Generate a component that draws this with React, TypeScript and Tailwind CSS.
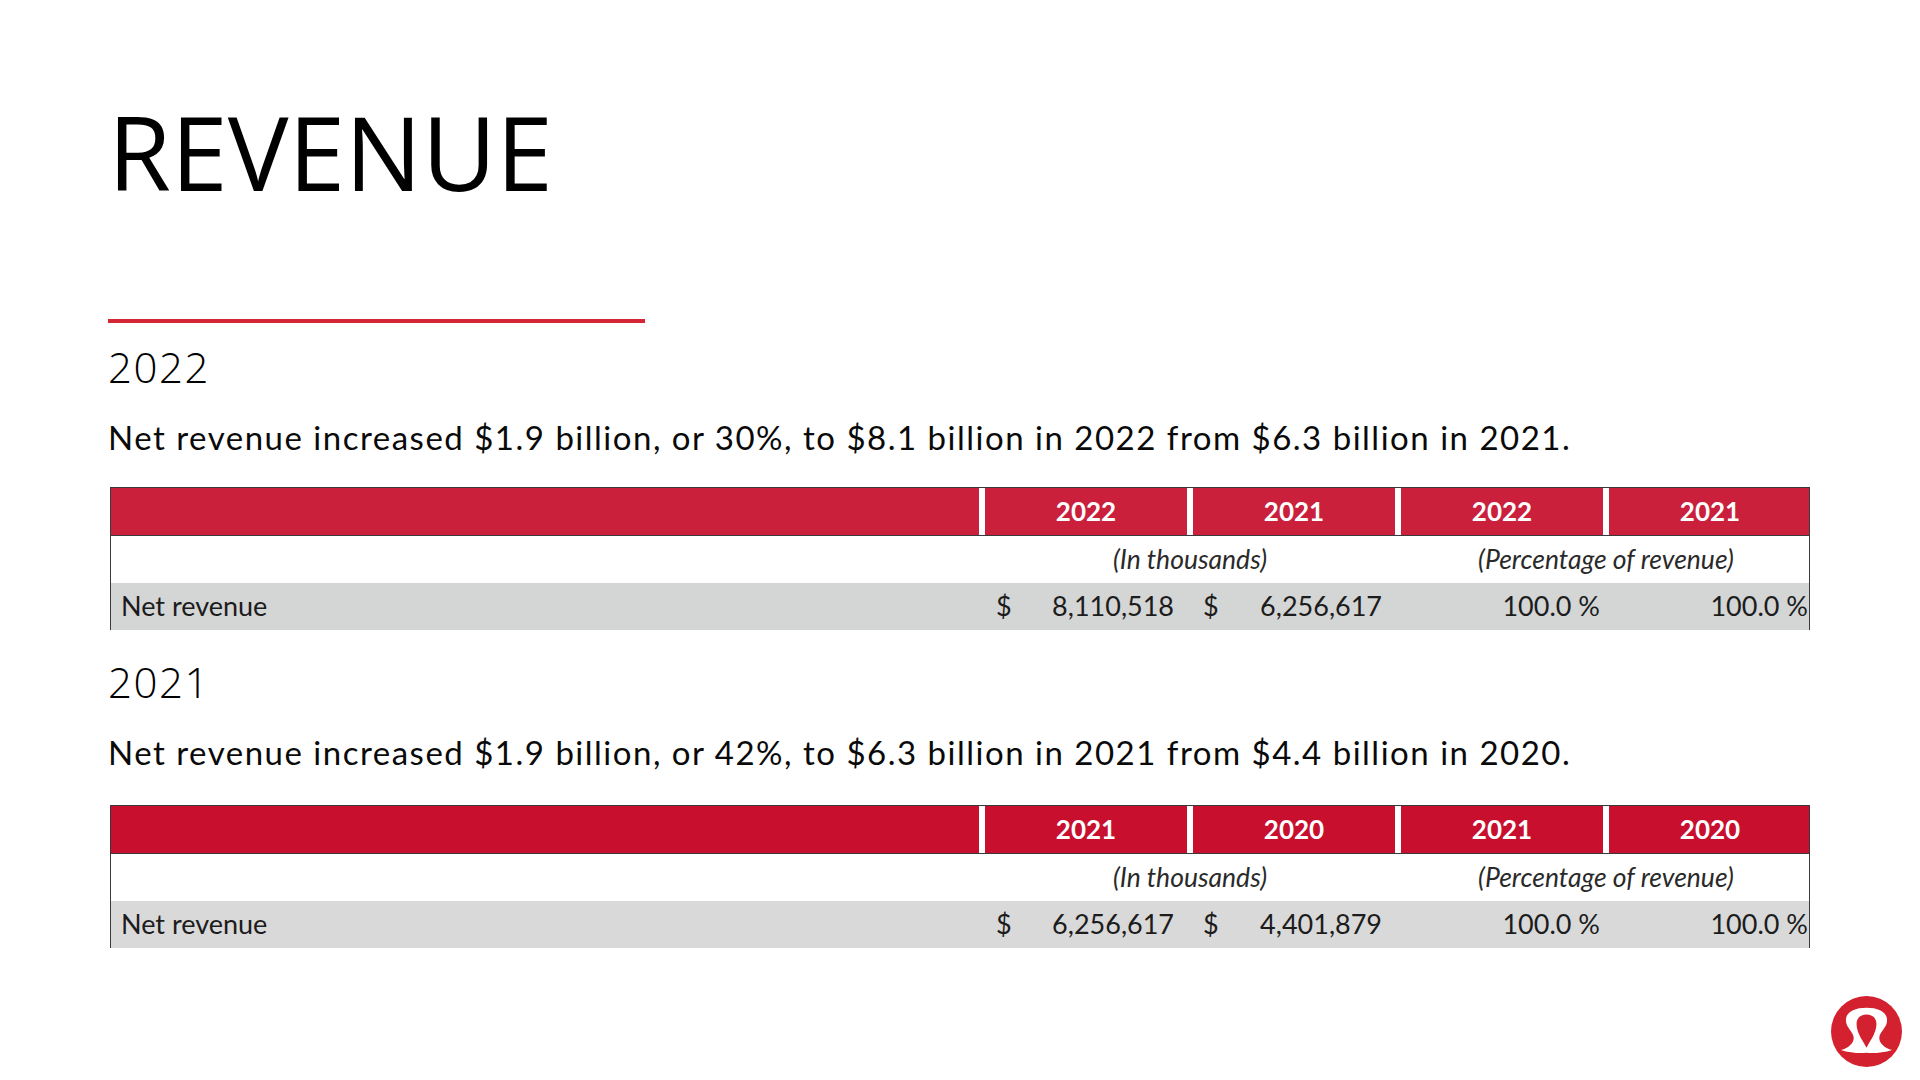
import React from "react";

type TableProps = {
  years: [string, string];
  amounts: [string, string];
  headBg: string;
  rowBg: string;
};

const RevenueTable = ({ years, amounts, headBg, rowBg }: TableProps) => {
  const heads = [years[0], years[1], years[0], years[1]];
  return (
    <div className="ml-[2px] w-[1700px] border-x border-t border-[#3a3a3a] font-['Lato',sans-serif]">
      <div className={`grid h-[48px] grid-cols-[868px_208px_208px_208px_208px] border-b border-[#3a3a3a] ${headBg}`}>
        <div />
        {heads.map((y, i) => (
          <div
            key={i}
            className="flex items-center justify-center border-l-[6px] border-white text-[26px] font-bold text-white"
          >
            {y}
          </div>
        ))}
      </div>
      <div className="grid h-[47px] grid-cols-[868px_416px_416px] bg-white text-[26.5px] italic text-[#2a2a2a]">
        <div />
        <div className="flex items-center justify-center pl-[6px]">(In thousands)</div>
        <div className="flex items-center justify-center pl-[6px]">(Percentage of revenue)</div>
      </div>
      <div className={`grid h-[47px] grid-cols-[868px_208px_208px_208px_208px] text-[27px] text-[#1c1c1c] ${rowBg}`}>
        <div className="flex items-center pl-[10px]">Net revenue</div>
        <div className="flex items-center justify-between pl-[17px] pr-[13px]">
          <span>$</span>
          <span>{amounts[0]}</span>
        </div>
        <div className="flex items-center justify-between pl-[16px] pr-[13px]">
          <span>$</span>
          <span>{amounts[1]}</span>
        </div>
        <div className="flex items-center justify-end pr-[3px]">100.0 %</div>
        <div className="flex items-center justify-end pr-[3px]">100.0 %</div>
      </div>
    </div>
  );
};

const Logo = () => (
  <svg viewBox="0 0 100 100" className="h-[71px] w-[71px]">
    <circle cx="50" cy="50" r="50" fill="#d3212f" />
    <path
      fill="#fff"
      d="M50 80 C40 81 26 80 14 76 C25 73 32 66 32 59 C32 50 21 45 21 34 C21 22 34 16.5 50 16.5 C66 16.5 79 22 79 34 C79 45 68 50 68 59 C68 66 75 73 86 76 C74 80 60 81 50 80 Z"
    />
    <path
      fill="#d3212f"
      d="M50 73 C46 64 36 53 36 39 C36 31 42 26 50 26 C58 26 64 31 64 39 C64 53 54 64 50 73 Z"
    />
  </svg>
);

export default function App() {
  return (
    <div className="flex h-[1080px] w-[1920px] flex-col bg-white pl-[108px] pr-[18px] text-black">
      <h1 className="mt-[101px] font-['Open_Sans',sans-serif] text-[102px] font-medium leading-[102px]">
        REVENUE
      </h1>
      <div className="mt-[116px] h-[4px] w-[537px] bg-[#d42634]" />
      <h2 className="mt-[23px] font-['Open_Sans',sans-serif] text-[42px] font-light leading-[42px] tracking-[1.5px]">
        2022
      </h2>
      <p className="mt-[33px] font-['Lato',sans-serif] text-[33px] font-normal leading-[33px] tracking-[1.5px] text-[#0a0a0a]">
        Net revenue increased $1.9 billion, or 30%, to $8.1 billion in 2022 from $6.3 billion in 2021.
      </p>
      <div className="mt-[33px]">
        <RevenueTable
          years={["2022", "2021"]}
          amounts={["8,110,518", "6,256,617"]}
          headBg="bg-[#cb203b]"
          rowBg="bg-[#d4d5d5]"
        />
      </div>
      <h2 className="mt-[31px] font-['Open_Sans',sans-serif] text-[42px] font-light leading-[42px] tracking-[1.5px]">
        2021
      </h2>
      <p className="mt-[33px] font-['Lato',sans-serif] text-[33px] font-normal leading-[33px] tracking-[1.5px] text-[#0a0a0a]">
        Net revenue increased $1.9 billion, or 42%, to $6.3 billion in 2021 from $4.4 billion in 2020.
      </p>
      <div className="mt-[36px]">
        <RevenueTable
          years={["2021", "2020"]}
          amounts={["6,256,617", "4,401,879"]}
          headBg="bg-[#c8102e]"
          rowBg="bg-[#d9d9d9]"
        />
      </div>
      <div className="mb-[13px] mt-auto self-end">
        <Logo />
      </div>
    </div>
  );
}
